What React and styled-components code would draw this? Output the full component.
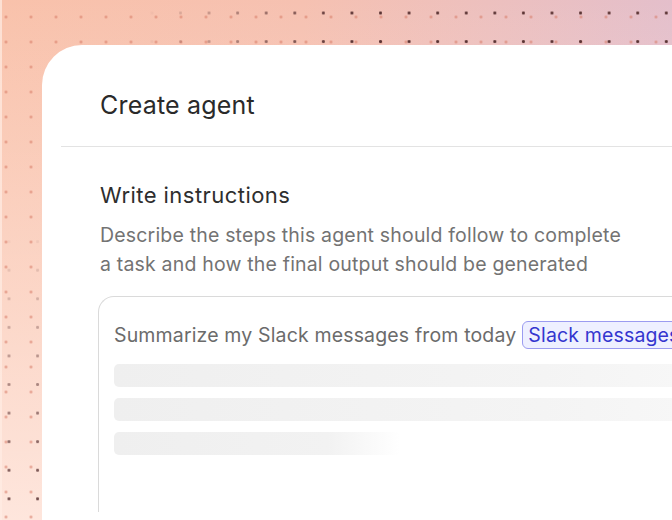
import styled, { createGlobalStyle } from "styled-components";

const GlobalStyle = createGlobalStyle`
  html, body {
    margin: 0;
    padding: 0;
    width: 672px;
    height: 520px;
    overflow: hidden;
  }
  body {
    font-family: Inter, "Noto Sans", sans-serif;
    -webkit-font-smoothing: antialiased;
  }
`;

const Backdrop = styled.div`
  position: relative;
  width: 672px;
  height: 520px;
  box-sizing: border-box;
  padding: 45px 0 0 42px;
  display: flex;
  overflow: hidden;
  box-shadow: inset 2px 0 0 rgba(255, 236, 228, 0.7);
  background:
    radial-gradient(circle, rgba(214, 120, 100, 0.6) 1.1px, transparent 1.6px) -6.5px 4.5px / 25px 25px,
    linear-gradient(180deg, rgba(255, 240, 234, 0) 0%, rgba(255, 236, 229, 0.85) 100%),
    linear-gradient(90deg, #f9c2ab 0%, #f6c1b1 45%, #e4bfcb 100%);

  &::before {
    content: "";
    position: absolute;
    inset: 0;
    background: radial-gradient(circle, #5b3434 1.2px, transparent 1.8px) -5.3px -1.3px / 28.58px 28.58px;
    -webkit-mask-image: radial-gradient(ellipse 480px 760px at 0 0, transparent 30%, #000 72%);
    mask-image: radial-gradient(ellipse 480px 760px at 0 0, transparent 30%, #000 72%);
  }
`;

const Card = styled.section`
  position: relative;
  z-index: 1;
  flex: 1;
  background: #ffffff;
  border-top-left-radius: 40px;
  display: flex;
  flex-direction: column;
`;

const Header = styled.header`
  height: 101px;
  display: flex;
  align-items: center;
  padding: 18px 0 0 58px;
  box-sizing: border-box;
`;

const Title = styled.h1`
  margin: 0;
  font-size: 25px;
  font-weight: 400;
  color: #2a2a2a;
  letter-spacing: 0.2px;
`;

const Divider = styled.hr`
  margin: 0 0 0 19px;
  border: none;
  border-top: 1.5px solid #e3e3e3;
`;

const Body = styled.div`
  padding: 34px 0 0 58px;
  display: flex;
  flex-direction: column;
  flex: 1;
`;

const SectionTitle = styled.h2`
  margin: 0;
  font-size: 22px;
  font-weight: 400;
  color: #2e2e2e;
  line-height: 28px;
  letter-spacing: 0.45px;
`;

const Hint = styled.p`
  margin: 12px 0 0;
  font-size: 19.5px;
  line-height: 29px;
  color: #737373;
  letter-spacing: 0.18px;
  white-space: nowrap;
`;

const InputBox = styled.div`
  margin: 17px 0 8px -2px;
  flex: 1;
  border: 1.5px solid #dadada;
  border-right: none;
  border-bottom: none;
  border-top-left-radius: 16px;
  padding: 24px 0 0 15px;
  display: flex;
  flex-direction: column;
  gap: 11px;
`;

const Prompt = styled.div`
  font-size: 19.5px;
  line-height: 28px;
  color: #6b6b6b;
  letter-spacing: 0.15px;
  white-space: nowrap;
  display: flex;
  align-items: center;
  gap: 6px;
  margin-bottom: 4px;
`;

const Chip = styled.span`
  display: inline-flex;
  align-items: center;
  height: 26px;
  padding: 0 5px;
  border: 1px solid #9b9cf0;
  border-radius: 6px;
  background: #eef0ff;
  color: #3436cf;
`;

const Skeleton = styled.div`
  height: 23px;
  border-radius: 5px;
  width: ${(p) => p.$width};
  background: ${(p) =>
    p.$fade
      ? "linear-gradient(90deg, #efefef 0%, #f2f2f2 75%, rgba(247,247,247,0) 100%)"
      : "linear-gradient(90deg, #efefef 0%, #f4f4f4 70%, #f8f8f8 100%)"};
`;

export default function App() {
  return (
    <>
      <GlobalStyle />
      <Backdrop>
        <Card>
          <Header>
            <Title>Create agent</Title>
          </Header>
          <Divider />
          <Body>
            <SectionTitle>Write instructions</SectionTitle>
            <Hint>
              Describe the steps this agent should follow to complete
              <br />a task and how the final output should be generated
            </Hint>
            <InputBox>
              <Prompt>
                Summarize my Slack messages from today
                <Chip>Slack messages</Chip>
              </Prompt>
              <Skeleton $width="calc(100% + 40px)" />
              <Skeleton $width="calc(100% + 40px)" />
              <Skeleton $width="286px" $fade />
            </InputBox>
          </Body>
        </Card>
      </Backdrop>
    </>
  );
}
